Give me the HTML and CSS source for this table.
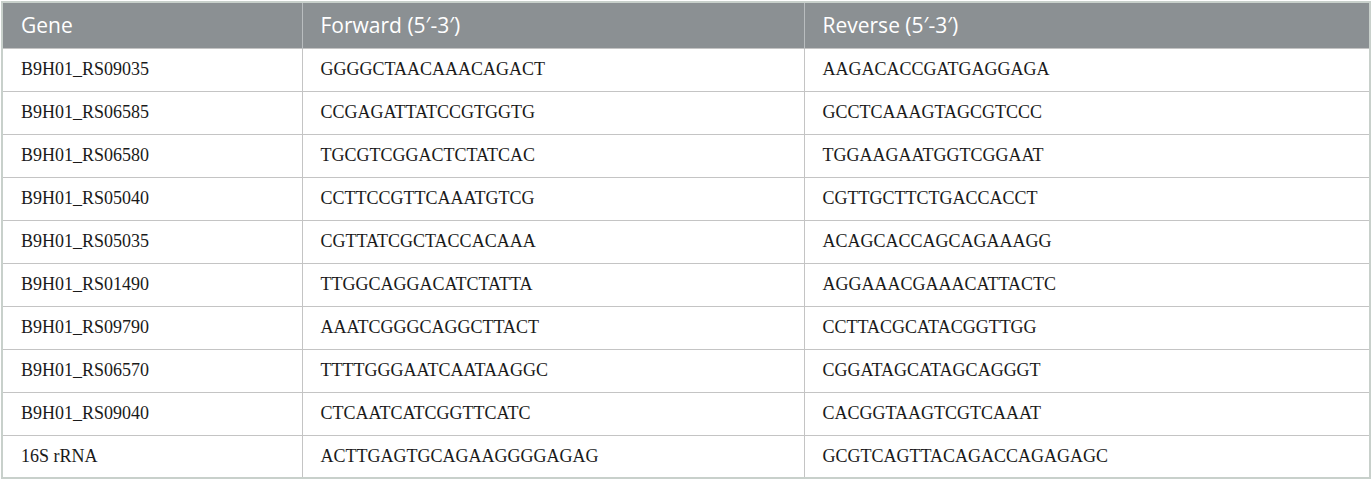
FILE: index.html
```html
<!DOCTYPE html>
<html>
<head>
<meta charset="utf-8">
<link rel="stylesheet" href="styles.css">
</head>
<body>
<table class="primers">
  <colgroup>
    <col class="c1"><col class="c2"><col class="c3">
  </colgroup>
  <thead>
    <tr><th>Gene</th><th>Forward (5′-3′)</th><th>Reverse (5′-3′)</th></tr>
  </thead>
  <tbody>
    <tr><td>B9H01_RS09035</td><td>GGGGCTAACAAACAGACT</td><td>AAGACACCGATGAGGAGA</td></tr>
    <tr><td>B9H01_RS06585</td><td>CCGAGATTATCCGTGGTG</td><td>GCCTCAAAGTAGCGTCCC</td></tr>
    <tr><td>B9H01_RS06580</td><td>TGCGTCGGACTCTATCAC</td><td>TGGAAGAATGGTCGGAAT</td></tr>
    <tr><td>B9H01_RS05040</td><td>CCTTCCGTTCAAATGTCG</td><td>CGTTGCTTCTGACCACCT</td></tr>
    <tr><td>B9H01_RS05035</td><td>CGTTATCGCTACCACAAA</td><td>ACAGCACCAGCAGAAAGG</td></tr>
    <tr><td>B9H01_RS01490</td><td>TTGGCAGGACATCTATTA</td><td>AGGAAACGAAACATTACTC</td></tr>
    <tr><td>B9H01_RS09790</td><td>AAATCGGGCAGGCTTACT</td><td>CCTTACGCATACGGTTGG</td></tr>
    <tr><td>B9H01_RS06570</td><td>TTTTGGGAATCAATAAGGC</td><td>CGGATAGCATAGCAGGGT</td></tr>
    <tr><td>B9H01_RS09040</td><td>CTCAATCATCGGTTCATC</td><td>CACGGTAAGTCGTCAAAT</td></tr>
    <tr><td>16S rRNA</td><td>ACTTGAGTGCAGAAGGGGAGAG</td><td>GCGTCAGTTACAGACCAGAGAGC</td></tr>
  </tbody>
</table>
</body>
</html>
```
FILE: styles.css
```css
html, body {
  margin: 0;
  padding: 0;
  background: #ffffff;
}
body {
  padding: 1px;
}
.primers {
  width: 1370px;
  border-collapse: collapse;
  border: 2px solid #c8d0cb;
  table-layout: fixed;
}
.c1 { width: 300px; }
.c2 { width: 502px; }
.c3 { width: auto; }
.primers th {
  background: #8b9093;
  color: #ffffff;
  font-family: "Open Sans", "Noto Sans", sans-serif;
  font-weight: 400;
  font-size: 21px;
  text-align: left;
  height: 46px;
  padding: 0 18px;
  border-left: 1px solid #b9bdbf;
  box-sizing: border-box;
}
.primers th:first-child { border-left: none; }
.primers td {
  font-family: "Liberation Serif", "Times New Roman", serif;
  font-size: 18px;
  color: #1a1a1a;
  height: 43px;
  padding: 0 18px;
  border: 1px solid #c4c4c4;
  box-sizing: border-box;
}
```
